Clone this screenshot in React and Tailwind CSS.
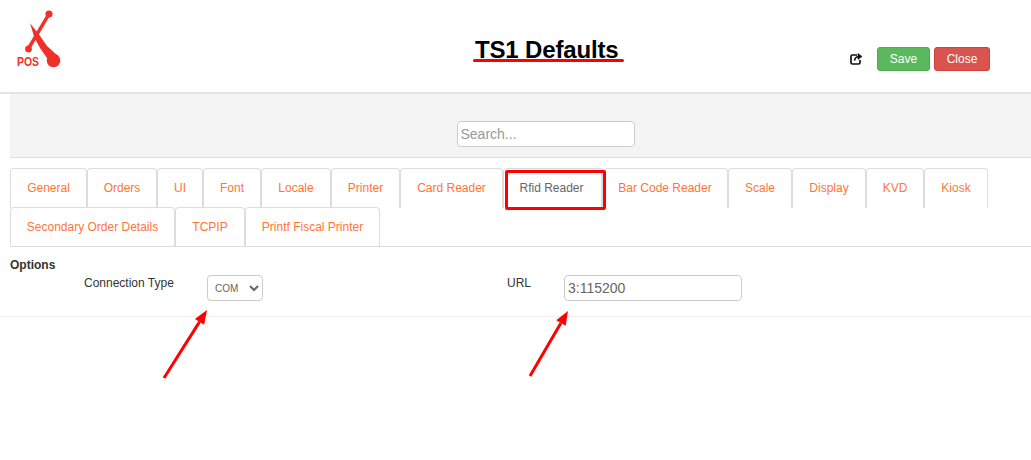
const row1 = [
  ["General", 77], ["Orders", 70], ["UI", 46], ["Font", 58], ["Locale", 70], ["Printer", 69], ["Card Reader", 103],
  ["Rfid Reader", 101, "active"], ["Bar Code Reader", 124, "nudge"], ["Scale", 64], ["Display", 74], ["KVD", 58], ["Kiosk", 64],
];
const row2 = [["Secondary Order Details", 165], ["TCPIP", 70], ["Printf Fiscal Printer", 135]];

function Tab({ label, width, variant }) {
  return (
    <a
      style={{ width }}
      className={
        "h-[40px] shrink-0 flex items-center justify-center rounded-t-[4px] border-x border-t border-[#dddddd] pb-[2px] text-[12px] leading-none " +
        (variant === "active" ? "text-[#666666] bg-white border-r-[3px] pr-[2px]" : "text-[#ff7538] ") +
        (variant === "nudge" ? "pr-[2px]" : "")
      }
    >
      {label}
    </a>
  );
}

function Logo() {
  return (
    <svg width="60" height="60" viewBox="0 0 60 60" className="shrink-0">
      <g fill="#f0312a">
        <circle cx="39" cy="6" r="3.6" />
        <path d="M37.6 5 L40.4 7 L20 41.5 L17 39.6 Z" />
        <circle cx="18.5" cy="41" r="3.4" />
        <path d="M20 15.3 L28 25 L37 38 L48.5 48.5 L40.5 55 L30 40 L24.5 30 Z" />
        <circle cx="43.5" cy="52.5" r="6.8" />
      </g>
      <text x="7" y="58" fontSize="12" fontWeight="700" fill="#f0312a" textLength="22" lengthAdjust="spacingAndGlyphs" fontFamily="Liberation Sans, sans-serif">POS</text>
    </svg>
  );
}

function Arrow({ x1, y1, x2, y2 }) {
  const a = Math.atan2(y2 - y1, x2 - x1);
  const L = 14, W = 5.5;
  const bx = x2 - L * Math.cos(a), by = y2 - L * Math.sin(a);
  const nx = -Math.sin(a) * W, ny = Math.cos(a) * W;
  return (
    <>
      <line x1={x1} y1={y1} x2={bx} y2={by} stroke="#fe0000" strokeWidth="3" />
      <polygon points={`${x2},${y2} ${bx + nx},${by + ny} ${bx - nx},${by - ny}`} fill="#fe0000" />
    </>
  );
}

export default function App() {
  return (
    <div className="relative w-[1031px] h-[460px] bg-white overflow-hidden font-['Liberation_Sans',Arial,sans-serif]">
      <header className="h-[94px] border-b-2 border-[#e3e3e3] flex pl-[10px] pt-[8px]">
        <Logo />
        <h1 className="ml-[405px] mt-[28px] h-[28px] text-[24px] leading-[28px] font-bold text-black tracking-[-0.15px] whitespace-nowrap">TS1 Defaults</h1>
        <div className="ml-auto mr-[41px] mt-[39px] flex items-start">
          <svg width="14" height="14" viewBox="0 0 14 14" className="mt-[5px] mr-[14px]" fill="none" stroke="#111" strokeWidth="1.7">
            <path d="M8 3 H3.5 A1.5 1.5 0 0 0 2 4.5 V10.5 A1.5 1.5 0 0 0 3.5 12 H9.5 A1.5 1.5 0 0 0 11 10.5 V8" />
            <path d="M5.5 8.5 C6 6 8 4.5 10 4.5" />
            <path d="M9 1.5 L13 4.5 L9 7.5 Z" fill="#111" strokeWidth="0.6" />
          </svg>
          <button className="w-[53px] h-[24px] rounded-[3px] bg-[#5cb85c] border border-[#4cae4c] text-white text-[12px]">Save</button>
          <button className="ml-[4px] w-[56px] h-[24px] rounded-[3px] bg-[#d9534f] border border-[#d43f3a] text-white text-[12px]">Close</button>
        </div>
      </header>

      <section className="ml-[10px] h-[64px] bg-[#f4f4f4] border-b border-[#dddddd] flex justify-center pl-[50px] pt-[27px]">
        <input readOnly placeholder="Search..." className="w-[178px] h-[26px] bg-white border border-[#cccccc] rounded-[4px] px-[3px] text-[14px] leading-[24px] text-[#555555] placeholder:text-[#999999] outline-none" />
      </section>

      <nav className="ml-[10px] mt-[10px]">
        <div className="flex h-[39px]">
          {row1.map(([l, w, v]) => <Tab key={l} label={l} width={w} variant={v} />)}
        </div>
        <div className="flex h-[40px] border-b border-[#dddddd]">
          {row2.map(([l, w]) => <Tab key={l} label={l} width={w} />)}
        </div>
      </nav>

      <section className="h-[70px] border-b border-[#f0f0f0] pl-[10px] pt-[11px]">
        <div className="text-[12px] leading-[14px] font-bold text-[#333333]">Options</div>
        <div className="flex mt-[3px] text-[12px] leading-[14px] text-[#333333]">
          <div className="w-[497px] pl-[74px] flex items-start">
            <label className="w-[123px] pt-[1px]">Connection Type</label>
            <select defaultValue="COM" className="w-[56px] h-[26px] border border-[#cccccc] rounded-[4px] pl-[3px] text-[10px] text-[#666666] bg-white outline-none">
              <option>COM</option>
            </select>
          </div>
          <div className="flex items-start">
            <label className="w-[57px] pt-[1px]">URL</label>
            <input readOnly value="3:115200" className="w-[178px] h-[26px] border border-[#cccccc] rounded-[4px] px-[3px] text-[14px] text-[#666666] outline-none" />
          </div>
        </div>
      </section>

      {/* Annotation overlays */}
      <div className="absolute left-[473px] top-[59px] w-[151px] h-[3px] rounded-full bg-[#fe0000]" />
      <div className="absolute left-[505px] top-[170px] w-[101px] h-[40px] border-[3px] border-[#fe0000] rounded-[2px]" />
      <svg width="1031" height="460" className="absolute left-0 top-0 pointer-events-none">
        <Arrow x1={164} y1={378} x2={207} y2={310} />
        <Arrow x1={530} y1={376} x2={568} y2={311} />
      </svg>
    </div>
  );
}
